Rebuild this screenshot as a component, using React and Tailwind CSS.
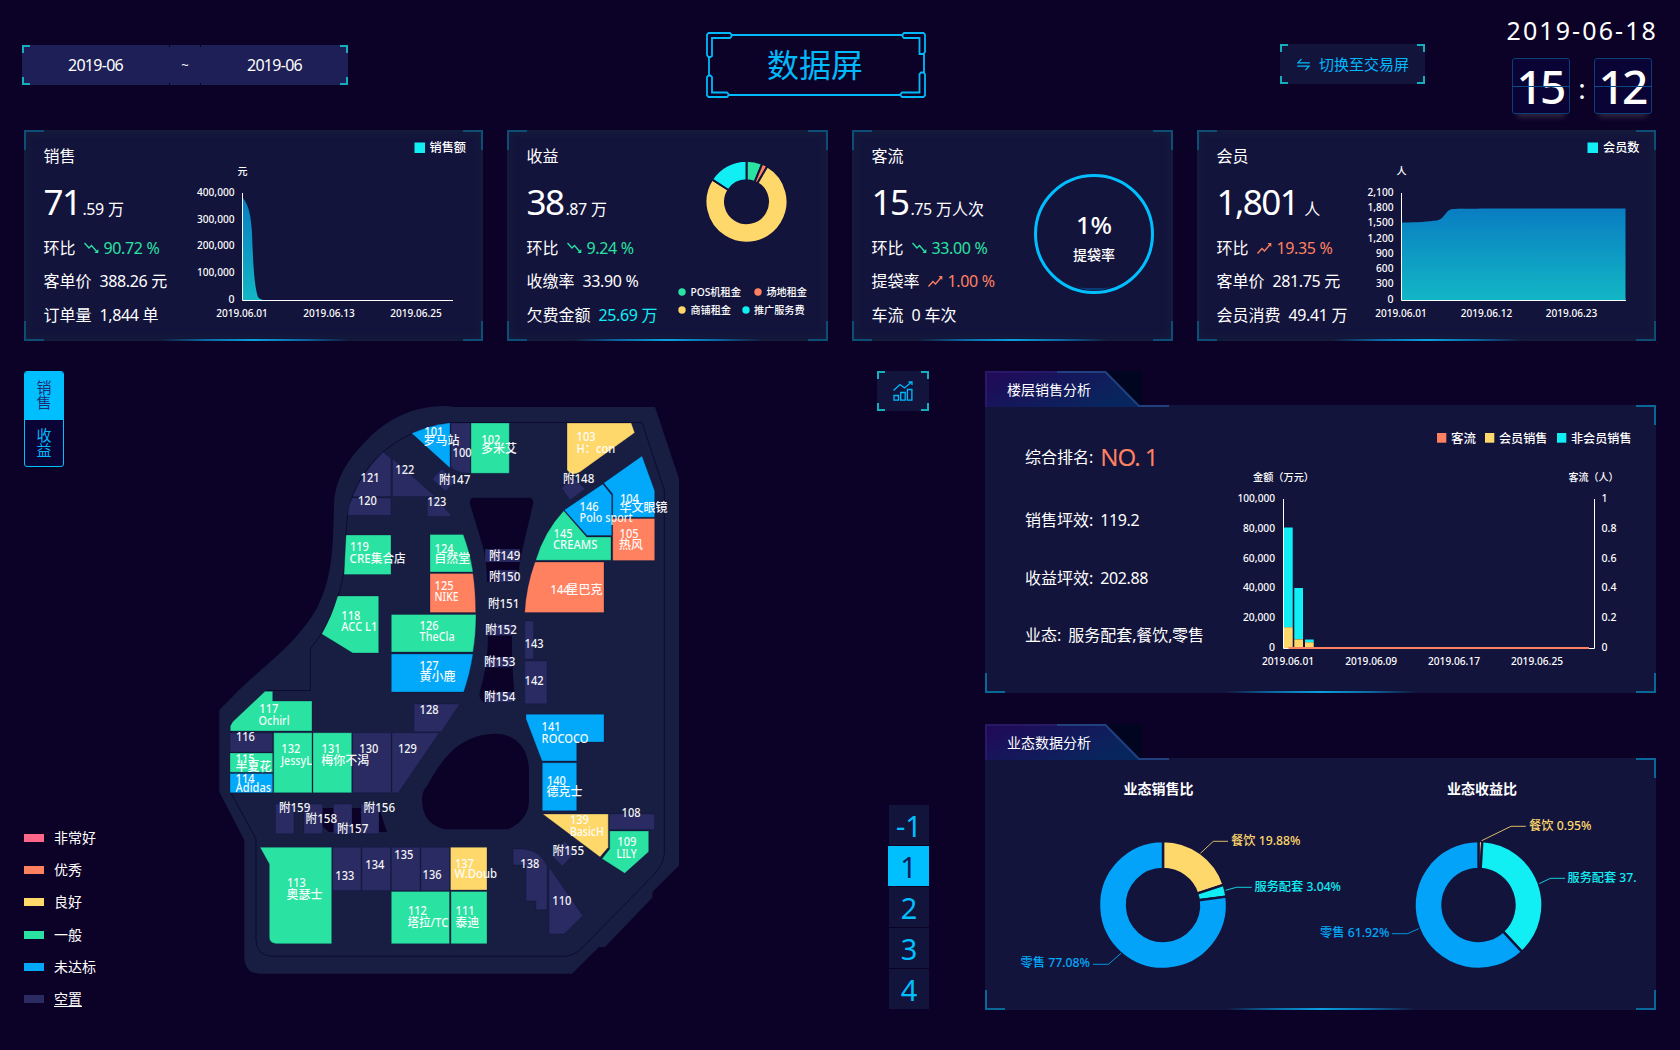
import React from "react";

const PANEL = "#13143c";
const GREEN = "#2ae2a2";
const BLUE = "#02a9fa";
const ORANGE = "#ff8160";
const YELLOW = "#fed86b";
const CYAN = "#11eef4";
const VOID = "#2a2b63";

/* Latin and digit runs are set slightly tighter than the CJK around them. */
function T({ children }) {
  return (
    <span className="whitespace-pre">
      {String(children)
        .split(/([\x21-\x7e]+)/)
        .map((s, i) => (i % 2 ? <span key={i} className="tracking-[-0.025em]">{s}</span> : s))}
    </span>
  );
}

/* Chart text, vertically centred on y. */
function L({ x, y, s = 11, fill = "#fff", anchor = "start", w, bold, children }) {
  const fit = w ? { textLength: w, lengthAdjust: "spacingAndGlyphs" } : {};
  return (
    <text x={x} y={y + s * 0.36} fontSize={s} fill={fill} textAnchor={anchor} fontWeight={bold ? 700 : 500} {...fit}>
      {children}
    </text>
  );
}

function Trend({ up }) {
  return (
    <svg className="mr-[5px] ml-2 h-[14px] w-[15px]" viewBox="0 0 15 14" fill="none" stroke="currentColor" strokeWidth="1.3">
      {up ? (
        <>
          <path d="M0.5 12.5L5 7.5L7.5 10L13.5 3" />
          <path d="M10.5 2H14.3V6Z" fill="currentColor" stroke="none" />
        </>
      ) : (
        <>
          <path d="M0.5 2L5 7L7.5 4.5L13.5 11.5" />
          <path d="M14.3 8V12H10.5Z" fill="currentColor" stroke="none" />
        </>
      )}
    </svg>
  );
}

function Corners({ size = "size-5", tone = "border-[#0d4d76]", skipTopLeft }) {
  const base = "pointer-events-none absolute " + size + " " + tone + " ";
  return (
    <>
      {!skipTopLeft && <i className={base + "top-0 left-0 border-t-2 border-l-2"} />}
      <i className={base + "top-0 right-0 border-t-2 border-r-2"} />
      <i className={base + "bottom-0 left-0 border-b-2 border-l-2"} />
      <i className={base + "right-0 bottom-0 border-r-2 border-b-2"} />
    </>
  );
}

function Glow() {
  return (
    <i className="absolute bottom-0 left-1/2 h-[2px] w-[190px] -translate-x-1/2 bg-[linear-gradient(90deg,transparent,#0a6aa5_25%,#0a9fe0_50%,#0a6aa5_75%,transparent)]" />
  );
}

function Card({ title, big, small, rows, children }) {
  return (
    <section className="relative flex h-[211px] bg-[#13143c] shadow-[inset_0_0_8px_2px_#15203a]">
      <div className="flex w-0 flex-1 flex-col pl-[19.5px] text-[16px] whitespace-nowrap text-white">
        <h2 className="mt-[14px] h-6 leading-6">{title}</h2>
        <div className="mt-[9px] flex h-[50px] items-baseline leading-[50px]">
          <span className="text-[35px] tracking-[-0.045em]">{big}</span>
          <span className="ml-[2px]"><T>{small}</T></span>
        </div>
        <div className="mt-1 flex flex-col">
          {rows.map((r) => (
            <div key={r.label} className="flex h-[33.5px] items-center leading-6">
              <span>{r.label}</span>
              {r.trend ? (
                <span className={r.trend === "up" ? "flex items-center text-[#ff8160]" : "flex items-center text-[#2ae2a2]"}>
                  <Trend up={r.trend === "up"} />
                  <T>{r.value}</T>
                </span>
              ) : (
                <span className={r.cyan ? "ml-2 text-[#11eef4]" : "ml-2"}><T>{r.value}</T></span>
              )}
            </div>
          ))}
        </div>
      </div>
      {children}
      <Corners />
      <Glow />
    </section>
  );
}

function polar(cx, cy, r, deg) {
  const a = ((deg - 90) * Math.PI) / 180;
  return [cx + r * Math.cos(a), cy + r * Math.sin(a)];
}

function Donut({ cx, cy, r, ri, parts, gap = 2.4 }) {
  let start = 0;
  return (
    <g stroke={PANEL} strokeWidth={gap}>
      {parts.map(([deg, color], i) => {
        const end = start + deg;
        const large = deg > 180 ? 1 : 0;
        const a = polar(cx, cy, r, start);
        const b = polar(cx, cy, r, end);
        const c = polar(cx, cy, ri, end);
        const d = polar(cx, cy, ri, start);
        start = end;
        return (
          <path
            key={i}
            fill={color}
            d={`M${a[0]} ${a[1]}A${r} ${r} 0 ${large} 1 ${b[0]} ${b[1]}L${c[0]} ${c[1]}A${ri} ${ri} 0 ${large} 0 ${d[0]} ${d[1]}Z`}
          />
        );
      })}
    </g>
  );
}

function Gradient({ id }) {
  return (
    <defs>
      <linearGradient id={id} x1="0" y1="0" x2="0" y2="1">
        <stop offset="0" stopColor="#097dc2" />
        <stop offset="1" stopColor="#12b7c5" />
      </linearGradient>
    </defs>
  );
}

function SalesChart() {
  const ys = [["400,000", 192], ["300,000", 219], ["200,000", 245], ["100,000", 272], ["0", 299]];
  return (
    <svg className="h-[211px] w-[303px]" viewBox="180 130 303 211">
      <Gradient id="sales" />
      <rect x="414.5" y="142.5" width="10.5" height="10.5" fill={CYAN} />
      <L x={429.5} y={148} s={12} w={36.5}>销售额</L>
      <L x={242.5} y={171.5} s={10} anchor="middle">元</L>
      {ys.map(([t, y]) => <L key={t} x={234.5} y={y} anchor="end" w={t === "0" ? 6 : 37.5}>{t}</L>)}
      <path d="M243 198C249 206 251 216 252 233C253 260 254 285 258 297C259 299 262 300 266 300.5H243Z" fill="url(#sales)" />
      <path d="M242.5 193V300.5H453" fill="none" stroke="#fff" />
      {[["2019.06.01", 242], ["2019.06.13", 329], ["2019.06.25", 416]].map(([t, x]) => (
        <L key={t} x={x} y={313} anchor="middle" w={51.5}>{t}</L>
      ))}
    </svg>
  );
}

function IncomeChart() {
  const items = [
    ["POS机租金", GREEN, 682, 690.5, 292.5, 50.5],
    ["场地租金", ORANGE, 758, 766.5, 292.5, 40.5],
    ["商铺租金", YELLOW, 682, 690.5, 310.5, 40.5],
    ["推广服务费", CYAN, 746, 754, 310.5, 50.5],
  ];
  return (
    <svg className="h-[211px] w-[161px]" viewBox="667 130 161 211">
      <Donut cx={746.5} cy={201.7} r={41} ri={21.5} parts={[[22.5, GREEN], [8, ORANGE], [272.5, YELLOW], [57, CYAN]]} gap={2} />
      {items.map(([t, c, dx, tx, y, w]) => (
        <g key={t}>
          <circle cx={dx} cy={y - 0.5} r="3.7" fill={c} />
          <L x={tx} y={y} s={10.2} w={w}>{t}</L>
        </g>
      ))}
    </svg>
  );
}

function BagRate() {
  return (
    <svg className="h-[211px] w-[161px]" viewBox="1012 130 161 211">
      <path d="M1077 287.5Q1094 288.6 1111 287.5Q1094 293 1077 287.5Z" fill="#0b3a78" />
      <circle cx="1094" cy="234" r="58.5" fill="none" stroke="#00bfff" strokeWidth="3" />
      <L x={1094} y={225.5} s={24} anchor="middle" w={36}>1%</L>
      <L x={1094} y={255} s={14} anchor="middle">提袋率</L>
    </svg>
  );
}

function MemberChart() {
  const ys = [["2,100", 192], ["1,800", 207.3], ["1,500", 222], ["1,200", 238], ["900", 253], ["600", 268], ["300", 283], ["0", 299]];
  return (
    <svg className="h-[211px] w-[296px]" viewBox="1360 130 296 211">
      <Gradient id="member" />
      <rect x="1587.5" y="142.5" width="10.5" height="10.5" fill={CYAN} />
      <L x={1603} y={148} s={12} w={36.5}>会员数</L>
      <L x={1401.5} y={171.5} s={10} anchor="middle">人</L>
      {ys.map(([t, y]) => <L key={t} x={1393.5} y={y} anchor="end" w={t.length === 5 ? 26 : t.length === 3 ? 17.5 : 6}>{t}</L>)}
      <path d="M1402 222.5C1418 222.5 1428 221.5 1437 220.5C1445 219 1445 209.5 1453 209C1470 208.5 1500 208.5 1625.5 208.5V300.5H1402Z" fill="url(#member)" />
      <path d="M1401.5 193V300.5H1626" fill="none" stroke="#fff" />
      {[["2019.06.01", 1401], ["2019.06.12", 1486.5], ["2019.06.23", 1571.5]].map(([t, x]) => (
        <L key={t} x={x} y={313} anchor="middle" w={51.5}>{t}</L>
      ))}
    </svg>
  );
}

const shops = [
  [BLUE, "M411.7 433.3Q430 425 450 422.7V468Z"],
  [VOID, "M451 423H470.5V473H464Q456 472 451 467Z"],
  [GREEN, "M471 423H509.3V473.3H471Z"],
  [YELLOW, "M567 423H631.3L634.7 432.7L580 472Q572 477 567 470Z"],
  [VOID, "M392.5 458.5L435 496.5H392.5Z"],
  [VOID, "M383 452L391 458.5V496.5H352.5Q362 473 383 452Z"],
  [VOID, "M352 498H391V515.3H347.7Q348 506 352 498Z"],
  [VOID, "M427.3 498H436L452 516.3H427.3Z"],
  [VOID, "M441.7 469L455 481L445.7 491.3L432.3 479.3Z"],
  [GREEN, "M346 535H391V574.5H344Z"],
  [GREEN, "M430 534.5H463.3Q470 552 473 572H430Z"],
  [ORANGE, "M430 573.5H473Q475.5 590 475.7 612.5H430Z"],
  [GREEN, "M337.7 596H378.7V653H352.7L321.7 634Q332 616 337.7 596Z"],
  [GREEN, "M391.3 614.5H476Q476 634 473 652H391.3Z"],
  [BLUE, "M391.3 654H473Q470 674 463.7 692H391.3Z"],
  [VOID, "M524.7 621H533.5V659H524.7Z"],
  [VOID, "M524.7 661H547V703.7H524.7Z"],
  [VOID, "M485 549H520V562H485Z"],
  [VOID, "M495 570H517V582H495Z"],
  [VOID, "M485 624H512V635.5H485Z"],
  [VOID, "M485 657H512V667.3H485Z"],
  [VOID, "M485 692H512V702.3H485Z"],
  [BLUE, "M602.7 484L611.7 495V535.5H587L564.3 510Z"],
  [BLUE, "M642 456L654.7 490.7V517.3H612.7V494L603.7 483Z"],
  [ORANGE, "M612.7 518.5H654.7V560.5H612.7Z"],
  [GREEN, "M563.7 510.7L586.7 537H611V560.3H535.7Q544 532 563.7 510.7Z"],
  [ORANGE, "M535 562H604V612.5H524.7Q526 587 535 562Z"],
  [GREEN, "M265 691.3H272.7V701H312V731H230.3V726L232.7 721.7Z"],
  [VOID, "M230 733H272.5V752H230Z"],
  [GREEN, "M230 753H272.7V772.3H230Z"],
  [BLUE, "M230 773.5H272.7V792.7H230Z"],
  [GREEN, "M273.7 732.7H312V792.7H273.7Z"],
  [GREEN, "M313 732.7H351.7V792.7H313Z"],
  [VOID, "M352.7 732.7H391V792.7H352.7Z"],
  [VOID, "M392 732.7H439.3L398.3 792.7H392Z"],
  [VOID, "M414 704H459.7L441.3 731.7H414Z"],
  [VOID, "M275.5 804H294V833.7H275.5Z"],
  [VOID, "M304 804H322.5V833.7H304Z"],
  [VOID, "M333.5 804H352V833.7H333.5Z"],
  [VOID, "M361 804H379V833.7H361Z"],
  [GREEN, "M260 847.3H331.7V943.7H276Q269.3 943 269.3 937V864Z"],
  [VOID, "M332.7 847.3H361V890.5H332.7Z"],
  [VOID, "M362 847.3H390.5V890.5H362Z"],
  [VOID, "M391.5 847.3H420V890.5H391.5Z"],
  [VOID, "M421 847.3H449.5V890.5H421Z"],
  [YELLOW, "M450.5 847.3H487V890H450.5Z"],
  [GREEN, "M391.3 891.5H449.5V943.7H391.3Z"],
  [GREEN, "M451 891.5H487V943.7H451Z"],
  [VOID, "M513 849H522Q540 850 547 866V909.7H536V901H526V865H513Z"],
  [VOID, "M549 867L582.7 915.7L564 934H549Z"],
  [VOID, "M565 841.5L575.7 852L562.3 866.3L551.7 855.5Z"],
  [VOID, "M573 477L585 489L570 500L561.7 488Z"],
  [BLUE, "M526 714.3H604V742H576.7V761H542L526 719Z"],
  [BLUE, "M542.3 762.7H576.7V810.7H542.3Z"],
  [YELLOW, "M542.7 814H608.3V847.3L600 857Z"],
  [VOID, "M609.3 814H654.5V829.5H609.3Z"],
  [GREEN, "M609.7 831H648.7V851.7L624.7 873.3L602 858.7L609.7 849Z"],
];

const shopLabels = [
  ["101", 424.7, 431.7], ["罗马站", 424, 440.7], ["100", 453, 452.3], ["102", 481.7, 439.7], ["多米艾", 481.3, 449],
  ["103", 577, 436.7], ["H：con", 577, 449], ["附147", 439.3, 479.3], ["附148", 563.3, 478.3], ["121", 361, 477.7],
  ["122", 395.7, 469.7], ["120", 358.3, 500.7], ["123", 427.7, 501.7], ["119", 350.3, 546.7], ["CRE集合店", 350, 558.7],
  ["124", 435, 548.3], ["自然堂", 434.7, 559], ["125", 435, 585.3], ["NIKE", 435, 596.7], ["126", 420, 625.7],
  ["TheCla", 420, 637], ["127", 420, 665.7], ["黄小鹿", 420, 676.7], ["118", 341.7, 615.7], ["ACC L1", 341.7, 626.7],
  ["145", 554, 533.7], ["CREAMS", 553.3, 544.7], ["146", 580, 506.7], ["Polo sport", 580, 518], ["104", 620.3, 498.3],
  ["华文眼镜", 620, 508], ["105", 620, 533.7], ["热风", 619.3, 544.7], ["144", 551, 590], ["星巴克", 567, 590],
  ["附149", 489.3, 555.7], ["附150", 489.3, 576.7], ["附151", 488.3, 603.3], ["附152", 485.7, 629.3], ["附153", 484.3, 661.7],
  ["附154", 484.3, 696.7], ["143", 525, 643.7], ["142", 525, 680.7], ["117", 259.7, 709], ["Ochirl", 259, 721],
  ["128", 420, 709.7], ["116", 236.3, 736.7], ["132", 281.7, 748.7], ["JessyL", 281.3, 760.7], ["131", 322, 748.7],
  ["梅你不渴", 321.7, 760.7], ["130", 359.7, 748.7], ["129", 398.3, 748.7], ["115", 236, 758.7], ["半夏花", 236, 766.7],
  ["114", 236, 779], ["Adidas", 236, 788], ["附159", 279.3, 807.3], ["附158", 306, 818.7], ["附157", 337.3, 828.7],
  ["附156", 364, 807.3], ["113", 287.3, 882.7], ["奥瑟士", 287, 894.7], ["133", 335.7, 875.7], ["134", 365.7, 865],
  ["135", 394.7, 854.7], ["136", 423, 874.7], ["137", 455.3, 863.7], ["W.Doub", 455, 874], ["112", 408.3, 910.7],
  ["塔拉/TC", 408, 922.7], ["111", 456, 910.7], ["泰迪", 455.7, 922.7], ["141", 542, 726.7], ["ROCOCO", 542, 738.7],
  ["140", 547.3, 780.7], ["德克士", 547, 792], ["139", 570.3, 819.7], ["BasicH", 570.3, 832], ["108", 622, 812.7],
  ["109", 617.7, 842], ["LILY", 617, 853.7], ["附155", 553, 850.7], ["138", 520.7, 863.7], ["110", 552.7, 900.7],
];

/* Latin names, with the width each takes on the plan. */
const nameWidth = {
  NIKE: 24, TheCla: 35, "ACC L1": 36, CREAMS: 44.5, "Polo sport": 53, Ochirl: 31, JessyL: 31,
  Adidas: 35.5, "W.Doub": 42.5, ROCOCO: 47, BasicH: 34, LILY: 20, "H：con": 38.5, CRE集合店: 56, "塔拉/TC": 41,
};

function labelWidth(t) {
  if (nameWidth[t]) return nameWidth[t];
  if (/^\d+$/.test(t)) return 19;
  if (/^附/.test(t)) return 31.5;
  return undefined;
}

function FloorMap() {
  return (
    <svg className="mt-[19px] h-[600px] w-[500px] shrink-0" viewBox="200 390 500 600">
      <path
        fill="#171e42"
        d="M655 407L679 479V865.5L652.5 892V897.5L605 947H599L572 973.7H259Q244.500 973 244.300 956V840L219.300 792V710L239 690C262 667 295 646 317 608C334 575 333 540 334 503C336 475 351 456 367 440C385 421 410 406 446 406L455 407Z"
      />
      <path
        fill="none"
        stroke="#0d0a32"
        d="M450 422.500H642L664.300 490V853Q664 864 653 875.500L583 947Q574 956 565 956.300H271Q256 955 256 940V839L231 793V724L267 690.500H310.300V649L322 633C334 613 343 585 345 563C347 540 344 516 353 495C362 473 372 462 383 452C402 436 425 426 450 422.500Z"
      />
      <g fill="#0c0126">
        <path d="M474 497.700H529Q534 498 533 504L523 547Q519 562 518 582H487Q487 562 483 547L470 504Q469 498 474 497.700Z" />
        <path d="M488 635H512V660L514 690Q514 700 510 702H484Q478 700 480 691Q488 665 488 635Z" />
        <path d="M493 733.700C512 733 529 744 529 772V800Q529 820 508 829.300H444Q422 823 422 800Q422 791 427 786C442 759 458 736 493 733.700Z" />
        <path d="M323 808H379L387 832H329L322 826Z" />
      </g>
      <g stroke="#0b1438" strokeOpacity="0.35" strokeWidth="0.8">
        {shops.map(([c, d], i) => <path key={i} fill={c} d={d} />)}
      </g>
      <g opacity="0.95">
        {shopLabels.map(([t, x, y]) => <L key={t} x={x - 0.4} y={y} s={12} w={labelWidth(t)}>{t}</L>)}
      </g>
    </svg>
  );
}

function Panel({ title, className, children }) {
  return (
    <section className={"relative flex w-[671px] flex-col " + className}>
      <div className="relative flex h-[34px] shrink-0 items-center pl-[22px] text-[14px] text-white">
        <svg className="absolute top-0 left-0 z-10 h-[37px] w-[190px]" viewBox="0 0 190 37">
          <defs>
            <linearGradient id={"tab" + title} x1="0" y1="0" x2="1" y2="0.5">
              <stop offset="0" stopColor="#220858" />
              <stop offset="1" stopColor="#08265e" />
            </linearGradient>
          </defs>
          <path d="M121 0H157V34H121Z" fill="#020520" />
          <path d="M0 0H120L155 36H0Z" fill={"url(#tab" + title + ")"} />
          <path d="M1 36V1H72" fill="none" stroke="#281868" strokeWidth="2" />
          <path d="M72 1H120.500L154 35H184" fill="none" stroke="#20407f" strokeWidth="2" />
        </svg>
        <span className="relative z-20 mt-[2px]">{title}</span>
      </div>
      <div className="relative flex flex-1 bg-[#13143c]">
        {children}
        <Corners tone="border-[#0a6899]" skipTopLeft />
        <Glow />
      </div>
    </section>
  );
}

function FloorChart() {
  const ys = [498, 528, 558, 587, 617, 647];
  const left = ["100,000", "80,000", "60,000", "40,000", "20,000", "0"];
  const right = ["1", "0.8", "0.6", "0.4", "0.2", "0"];
  const width = { 7: 37.5, 6: 32, 3: 15, 1: 6 };
  return (
    <svg className="h-[288px] w-[436px] shrink-0" viewBox="1220 405 436 288">
      <rect x="1437" y="433" width="9.300" height="9.700" fill={ORANGE} />
      <L x={1451} y={438.500} s={12} w={25}>客流</L>
      <rect x="1485" y="433" width="9.300" height="9.700" fill={YELLOW} />
      <L x={1499} y={438.500} s={12} w={48.500}>会员销售</L>
      <rect x="1557" y="433" width="9.300" height="9.700" fill={CYAN} />
      <L x={1571} y={438.500} s={12} w={60.500}>非会员销售</L>
      <L x={1253} y={477.500} s={10.200} w={61}>金额（万元）</L>
      <L x={1568.500} y={477.500} s={10.200} w={50}>客流（人）</L>
      {ys.map((y, i) => (
        <g key={y}>
          <L x={1275} y={y} anchor="end" w={width[left[i].length]}>{left[i]}</L>
          <L x={1601.500} y={y} w={width[right[i].length]}>{right[i]}</L>
        </g>
      ))}
      <g fill={CYAN}>
        <rect x="1284" y="527.500" width="8.700" height="100" />
        <rect x="1294.300" y="588" width="8.700" height="51" />
        <rect x="1305" y="639.500" width="8.700" height="3" />
      </g>
      <g fill={YELLOW}>
        <rect x="1284" y="627.300" width="8.700" height="21" />
        <rect x="1294.300" y="639.300" width="8.700" height="9" />
        <rect x="1305" y="642.300" width="8.700" height="6" />
      </g>
      <path d="M1283.500 499V648.500H1594.500V499" fill="none" stroke="#fff" />
      <path d="M1288.500 648H1589" stroke={ORANGE} strokeWidth="1.800" />
      {[["2019.06.01", 1288], ["2019.06.09", 1371.200], ["2019.06.17", 1454], ["2019.06.25", 1537]].map(([t, x]) => (
        <L key={t} x={x} y={661} anchor="middle" w={52}>{t}</L>
      ))}
    </svg>
  );
}

function FormatCharts() {
  const a = 3.6;
  const lines = [
    [YELLOW, "M1200.400 853.300L1213.300 841.300H1228"],
    [CYAN, "M1225.400 890.300L1236.500 887.300H1251.700"],
    [BLUE, "M1121 953.300L1108.400 964.300H1093"],
    [YELLOW, "M1481.600 840.700L1511 826.300H1525.800"],
    [CYAN, "M1539.200 883.700L1550.400 878.300H1565"],
    [BLUE, "M1418.700 928.700L1407.500 933.700H1392"],
  ];
  return (
    <svg className="h-[252px] w-[671px]" viewBox="985 758 671 252">
      <L x={1158.500} y={789} s={14} bold anchor="middle">业态销售比</L>
      <L x={1482} y={789} s={14} bold anchor="middle">业态收益比</L>
      <Donut cx={1163} cy={905} r={64} ri={36} parts={[[19.88 * a, YELLOW], [3.04 * a, CYAN], [77.08 * a, "#02a3f8"]]} />
      <Donut cx={1478.500} cy={905} r={64} ri={36} parts={[[0.95 * a, YELLOW], [37.13 * a, CYAN], [61.92 * a, "#02a3f8"]]} />
      {lines.map(([c, d]) => <path key={d} d={d} fill="none" stroke={c} strokeOpacity="0.850" />)}
      <L x={1231} y={840.500} s={12} fill={YELLOW} w={69.500}>餐饮 19.88%</L>
      <L x={1254.500} y={887} s={12} fill={CYAN} w={86.500}>服务配套 3.04%</L>
      <L x={1020.500} y={963} s={12} fill={BLUE} w={69.500}>零售 77.08%</L>
      <L x={1529} y={826} s={12} fill={YELLOW} w={62.500}>餐饮 0.95%</L>
      <L x={1567.500} y={878} s={12} fill={CYAN} w={69}>服务配套 37.</L>
      <L x={1320} y={932.700} s={12} fill={BLUE} w={69.500}>零售 61.92%</L>
    </svg>
  );
}

function Stat({ label, value, big }) {
  return (
    <div className="flex h-[57.500px] items-center text-[16px] leading-6 text-white">
      <span>{label}</span>
      <span className={big ? "ml-[7px] text-[24px] tracking-[-0.045em] text-[#ff8160]" : "ml-[7px]"}>
        {big ? value : <T>{value}</T>}
      </span>
    </div>
  );
}

function ClockBox({ value }) {
  return (
    <div className="relative flex h-14 w-[58px] items-center justify-center rounded-[3px] border border-[#0d3e78] bg-[#0a0336] text-[46px] leading-none font-medium tracking-[-0.060em] text-white shadow-[0_8px_6px_-5px_rgba(120,120,120,0.350)]">
      <span className="-ml-[2px]">{value}</span>
      <i className="absolute top-[27px] -left-[1px] h-px w-[58px] bg-[#0a4a85]" />
    </div>
  );
}

function TitleFrame() {
  return (
    <div className="relative ml-[358px] flex h-[66px] w-[220px] items-center justify-center">
      <svg className="absolute inset-0 h-[66px] w-[220px]" viewBox="0 0 220 66" fill="none" stroke="#00b9fb" strokeWidth="1.800">
        <path d="M26 3H197M218 22V41M195 63H22M3 44V26" />
        <path d="M6 24V6H24L25.500 4.500V2.500L24 1H2.500L1 2.500V23L2.500 25H4.500Z" />
        <path d="M213.500 22V6H198L196.500 4.500V2.500L198 1H217.500L219 2.500V20L217.500 22Z" />
        <path d="M6 45V60.500H21L22.500 62V63.500L21 65H2.500L1 63.500V45L2.500 43.500H4.500Z" />
        <path d="M213.500 42V60.500H196L194.500 62V63.500L196 65H217.500L219 63.500V42L217.500 40.500H215Z" />
      </svg>
      <h1 className="-ml-[2px] text-[32px] leading-none text-[#00b9fb]">数据屏</h1>
    </div>
  );
}

/* Small dark notches where two date fields meet. */
function Notch() {
  return (
    <i className="flex w-px flex-col justify-between bg-[#1d1f56]">
      <i className="h-[2px] bg-[#0c0126]" />
      <i className="h-[2px] bg-[#0c0126]" />
    </i>
  );
}

const legend = [
  ["非常好", "bg-[#ff6687]"],
  ["优秀", "bg-[#ff8160]"],
  ["良好", "bg-[#fed86b]"],
  ["一般", "bg-[#2ae2a2]"],
  ["未达标", "bg-[#02a9fa]"],
  ["空置", "bg-[#2a2b63]"],
];

export default function App() {
  return (
    <main className="flex h-[1050px] w-[1680px] flex-col overflow-hidden bg-[#0c0126] font-['Noto_Sans','Noto_Sans_CJK_SC',sans-serif]">
      <header className="flex h-[130px] shrink-0 items-start pl-[22px] text-white">
        <div className="relative mt-[45px] flex h-10 w-[326px] text-center text-[16px] leading-[41px]">
          <span className="w-[147px] bg-[#1d1f56]"><span className="tracking-[-0.045em]">2019-06</span></span>
          <Notch />
          <span className="w-[30px] bg-[#1d1f56] text-[13px]">~</span>
          <Notch />
          <span className="flex-1 bg-[#1d1f56]"><span className="tracking-[-0.045em]">2019-06</span></span>
          <Corners size="size-2" tone="border-[#14aebd]" />
        </div>
        <div className="mt-8"><TitleFrame /></div>
        <button className="relative mt-11 ml-[354px] flex h-10 w-[145px] items-center gap-[9px] bg-[#13143c] pl-[17px] text-[15px] leading-none text-[#00b9fb]">
          <svg className="size-[13px]" viewBox="0 0 13 13" fill="none" stroke="currentColor" strokeWidth="1.200">
            <path d="M4.500 0.800L1 4.800H12.800M8.500 12.200L12 8.200H0.200" />
          </svg>
          切换至交易屏
          <Corners size="size-2" tone="border-[#14aebd]" />
        </button>
        <div className="ml-[78px] flex w-[153px] flex-col items-end">
          <time className="mt-[14px] -mr-[2px] text-[25px] leading-[32px] tracking-[2.100px]">2019-06-18</time>
          <div className="mt-3 mr-[4px] flex items-center">
            <ClockBox value="15" />
            <span className="w-6 pt-1 text-center text-[28px] leading-none">:</span>
            <ClockBox value="12" />
          </div>
        </div>
      </header>

      <div className="grid grid-cols-[459px_321px_321px_459px] gap-6 px-6">
        <Card title="销售" big="71" small=".59 万" rows={[
          { label: "环比", value: "90.72 %", trend: "down" },
          { label: "客单价", value: "388.26 元" },
          { label: "订单量", value: "1,844 单" },
        ]}><SalesChart /></Card>
        <Card title="收益" big="38" small=".87 万" rows={[
          { label: "环比", value: "9.24 %", trend: "down" },
          { label: "收缴率", value: "33.90 %" },
          { label: "欠费金额", value: "25.69 万", cyan: true },
        ]}><IncomeChart /></Card>
        <Card title="客流" big="15" small=".75 万人次" rows={[
          { label: "环比", value: "33.00 %", trend: "down" },
          { label: "提袋率", value: "1.00 %", trend: "up" },
          { label: "车流", value: "0 车次" },
        ]}><BagRate /></Card>
        <Card title="会员" big="1,801" small=" 人" rows={[
          { label: "环比", value: "19.35 %", trend: "up" },
          { label: "客单价", value: "281.75 元" },
          { label: "会员消费", value: "49.41 万" },
        ]}><MemberChart /></Card>
      </div>

      <div className="mt-[30px] flex h-[639px] px-6">
        <aside className="flex w-[176px] shrink-0 flex-col justify-between pb-px">
          <div className="flex h-24 w-10 flex-col overflow-hidden rounded-[3px] border border-[#00bfff] bg-[#0a0336] text-center text-[15px] leading-[15px]">
            <div className="flex h-12 flex-col items-center justify-center bg-[#00bfff] pb-[2px] text-[#1c2c72]"><span>销</span><span>售</span></div>
            <div className="flex flex-1 flex-col items-center justify-center pb-px text-[#00b9fb]"><span>收</span><span>益</span></div>
          </div>
          <ul className="flex flex-col gap-[12.200px]">
            {legend.map(([t, c]) => (
              <li key={t} className="flex h-5 items-center gap-[10px] text-[14px] leading-5 text-white">
                <i className={"h-2 w-5 " + c} />
                <span className={t === "空置" ? "underline underline-offset-2" : ""}>{t}</span>
              </li>
            ))}
          </ul>
        </aside>

        <FloorMap />

        <nav className="ml-auto flex w-[52px] shrink-0 flex-col items-end justify-between pb-px">
          <button className="relative flex h-10 w-[52px] items-center justify-center bg-[#13143c]">
            <svg className="h-5 w-5" viewBox="0 0 20 20" fill="none" stroke="#00b9fb" strokeWidth="1.300">
              <path d="M0.500 9.500L7 3.500L11.500 7L18 1.500M15.500 1H19V4" />
              <path d="M1 14.500H5.500V19.200H1ZM7.700 11.500H12.200V19.200H7.700ZM14.400 8.500H18.900V19.200H14.400Z" />
            </svg>
            <Corners size="size-2" tone="border-[#14aebd]" />
          </button>
          <div className="flex flex-col items-end gap-px text-center text-[29px] leading-[41px] text-[#00bfff]">
            <span className="h-10 w-10 bg-[#13143c]">-1</span>
            <span className="h-10 w-[41px] bg-[#00bfff] text-[#171a58]">1</span>
            <span className="h-10 w-10 bg-[#13143c]">2</span>
            <span className="h-10 w-10 bg-[#13143c]">3</span>
            <span className="h-10 w-10 bg-[#13143c]">4</span>
          </div>
        </nav>

        <div className="ml-14 flex w-[671px] shrink-0 flex-col justify-between">
          <Panel title="楼层销售分析" className="h-[322px]">
            <div className="flex w-[235px] flex-col pt-[23px] pl-10 whitespace-nowrap">
              <div className="mb-[6px]"><Stat label="综合排名:" value="NO. 1" big /></div>
              <Stat label="销售坪效:" value="119.2" />
              <Stat label="收益坪效:" value="202.88" />
              <Stat label="业态:" value="服务配套,餐饮,零售" />
            </div>
            <FloorChart />
          </Panel>
          <Panel title="业态数据分析" className="h-[286px]">
            <FormatCharts />
          </Panel>
        </div>
      </div>
    </main>
  );
}
